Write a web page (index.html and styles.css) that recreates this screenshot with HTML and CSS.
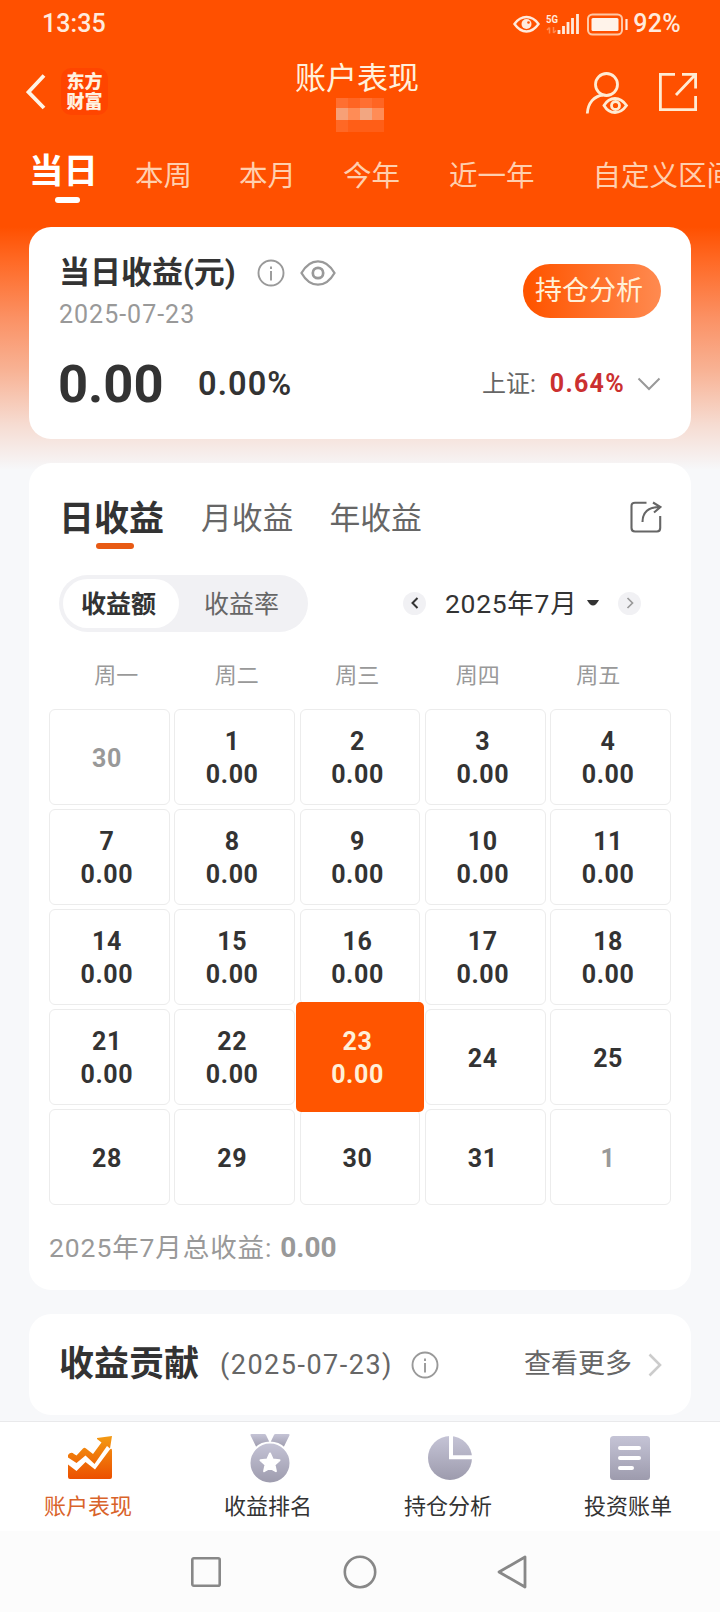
FILE: index.html
```html
<!DOCTYPE html>
<html lang="zh-CN">
<head>
<meta charset="utf-8">
<title>账户表现</title>
<link rel="stylesheet" href="styles.css">
</head>
<body>
<div class="statusbar">
  <span class="clock">13:35</span>
  <svg class="status-icons" width="116" height="24" viewBox="0 0 116 24" fill="none" stroke="#ffeadd">
    <path d="M1.500 12C5 7 9 5 13.500 5S22 7 25.500 12C22 17 18 19.500 13.500 19.500S5 17 1.500 12Z" stroke-width="2.400"/>
    <circle cx="13.500" cy="12" r="5" fill="#ffeadd" stroke="none"/>
    <circle cx="15.500" cy="10.500" r="1.300" fill="#ff5000" stroke="none"/>
    <text class="net" x="33" y="10.500" textLength="12" lengthAdjust="spacingAndGlyphs">5G</text>
    <path d="M36.500 15.500v6M34 18l2.500-2.500M40.500 15v6M40.500 21l2.500-2.500" stroke="#ff8a50" stroke-width="1.500"/>
    <path d="M46 22v-4M50.500 22v-8M55 22v-12M59.500 22V6M64.500 22V2" stroke-width="2.800"/>
    <rect x="75" y="2.500" width="34" height="20" rx="4.500" stroke-width="2" stroke="#ffc7a5"/>
    <rect x="78.500" y="6" width="27" height="13" rx="1.500" fill="#fff3ea" stroke="none"/>
    <path d="M113.500 7v11" stroke-width="2.200"/>
  </svg>
  <span class="percent">92%</span>
</div>
<header class="topbar">
  <svg class="back" width="20" height="36" viewBox="0 0 20 36" fill="none" stroke="#fff4e6" stroke-width="3.800"><path d="M18 1.500 2.500 18 18 34"/></svg>
  <div class="logo"><span>东方</span><span>财富</span></div>
  <div class="title">
    <h1>账户表现</h1>
    <svg width="48" height="34" viewBox="0 0 48 34" shape-rendering="crispEdges">
      <path fill="#ff6f31" d="M0 0h12v10H0zM24 0h12v10H24z"/><path fill="#ff6523" d="M12 0h12v10H12zM36 0h12v10H36z"/>
      <path fill="#f7a077" d="M0 10h12v12H0z"/><path fill="#ff8c56" d="M12 10h12v12H12zM36 10h12v12H36z"/><path fill="#f2a681" d="M24 10h12v12H24z"/>
      <path fill="#ff6825" d="M0 22h12v12H0z"/><path fill="#ff5e17" d="M12 22h36v12H12z"/>
    </svg>
  </div>
  <svg class="user" width="44" height="44" viewBox="0 0 44 44" fill="none" stroke="#ffebd3" stroke-width="2.800">
    <circle cx="21.500" cy="13.500" r="11"/><path d="M2.300 42.500C3 32 9 25 18 24"/>
    <path d="M19 34.500c3-5 7-7 11-7s8 2 11.500 7c-3.500 5-7.500 7-11.500 7s-8-2-11-7Z"/><circle cx="30.500" cy="34.500" r="4"/>
  </svg>
  <svg class="export" width="40" height="40" viewBox="0 0 40 40" fill="none" stroke="#ffebd3" stroke-width="2.800"><path d="M17 2.400H2.400v35.200h35.200V24M24 2.400h13.600v14M37 3 18 23"/></svg>
</header>
<nav class="ranges">
  <span class="range active">当日</span><span class="range r2">本周</span><span class="range r3">本月</span><span class="range r4">今年</span><span class="range r5">近一年</span><span class="range r6">自定义区间</span>
</nav>
<main>
  <section class="card summary">
    <div class="summary-head">
      <div>
        <div class="summary-title"><h2>当日收益(元)</h2>
          <svg class="info" width="28" height="28" viewBox="0 0 28 28" fill="none" stroke="#999" stroke-width="1.900"><circle cx="14" cy="14" r="12.500"/><path d="M14 12v9.500M14 7.500v2.500"/></svg>
          <svg class="eye" width="36" height="28" viewBox="0 0 36 28" fill="none" stroke="#999" stroke-width="2.300"><path d="M1.500 14C6 6 12 2.300 18 2.300S30 6 34.500 14C30 22 24 25.700 18 25.700S6 22 1.500 14Z"/><circle cx="18" cy="14" r="5.200" stroke-width="2.700"/></svg>
        </div>
        <div class="date">2025-07-23</div>
      </div>
      <button class="analyze">持仓分析</button>
    </div>
    <div class="figures">
      <span class="amount">0.00</span><span class="rate">0.00%</span>
      <span class="index-name">上证:</span><span class="index-rate">0.64%</span>
      <svg width="24" height="14" viewBox="0 0 24 14" fill="none" stroke="#999" stroke-width="2"><path d="m1.500 1.500 10.500 10.500L22.500 1.500"/></svg>
    </div>
  </section>

  <section class="card calendar">
    <div class="periods">
      <span class="period active">日收益</span><span class="period p2">月收益</span><span class="period p3">年收益</span>
      <svg width="32" height="32" viewBox="0 0 32 32" fill="none" stroke="#666" stroke-width="2.100"><path d="M16.500 1.800H5Q1.500 1.800 1.500 5v22Q1.500 30.500 5 30.500h22q3.200 0 3.200-3.500V15M12.500 21C12.500 11 18 6 30 6M23 1.500 30.500 6 24 11.500"/></svg>
    </div>
    <div class="controls">
      <div class="segment"><span class="seg active">收益额</span><span class="seg">收益率</span></div>
      <div class="month">
        <span class="arrow"><svg width="8" height="12" viewBox="0 0 8 12" fill="none" stroke="#333" stroke-width="2"><path d="M6.500 1 1.500 6l5 5"/></svg></span>
        <span class="month-name">2025年7月</span>
        <svg class="caret" width="12" height="6" viewBox="0 0 12 6"><path d="M0 0h12Q9 5.500 6 5.500T0 0Z" fill="#333"/></svg>
        <span class="arrow"><svg width="8" height="12" viewBox="0 0 8 12" fill="none" stroke="#999" stroke-width="1.700"><path d="m1.500 1 5 5-5 5"/></svg></span>
      </div>
    </div>
    <div class="weekdays"><span>周一</span><span>周二</span><span>周三</span><span>周四</span><span>周五</span></div>
    <div class="days">
      <div class="day out"><b>30</b></div><div class="day"><b>1</b><b>0.00</b></div><div class="day"><b>2</b><b>0.00</b></div><div class="day"><b>3</b><b>0.00</b></div><div class="day"><b>4</b><b>0.00</b></div>
      <div class="day"><b>7</b><b>0.00</b></div><div class="day"><b>8</b><b>0.00</b></div><div class="day"><b>9</b><b>0.00</b></div><div class="day"><b>10</b><b>0.00</b></div><div class="day"><b>11</b><b>0.00</b></div>
      <div class="day"><b>14</b><b>0.00</b></div><div class="day"><b>15</b><b>0.00</b></div><div class="day"><b>16</b><b>0.00</b></div><div class="day"><b>17</b><b>0.00</b></div><div class="day"><b>18</b><b>0.00</b></div>
      <div class="day"><b>21</b><b>0.00</b></div><div class="day"><b>22</b><b>0.00</b></div><div class="day selected"><b>23</b><b>0.00</b></div><div class="day"><b>24</b></div><div class="day"><b>25</b></div>
      <div class="day"><b>28</b></div><div class="day"><b>29</b></div><div class="day"><b>30</b></div><div class="day"><b>31</b></div><div class="day out"><b>1</b></div>
    </div>
    <div class="total"><span>2025年7月总收益:</span><b>0.00</b></div>
  </section>

  <section class="card contribution">
    <h2>收益贡献</h2><span class="contrib-date">(2025-07-23)</span>
    <svg width="28" height="28" viewBox="0 0 28 28" fill="none" stroke="#999" stroke-width="1.900"><circle cx="14" cy="14" r="12.500"/><path d="M14 12v9.500M14 7.500v2.500"/></svg>
    <span class="more">查看更多</span>
    <svg class="chevron" width="14" height="24" viewBox="0 0 14 24" fill="none" stroke="#ccc" stroke-width="2.600"><path d="m1.500 1.500 10.500 10.500L1.500 22.500"/></svg>
  </section>
</main>
<nav class="tabbar">
  <a class="tab active">
    <svg width="50" height="50" viewBox="0 0 50 50"><defs><linearGradient id="hot" x1="0" y1="0" x2="0" y2="1"><stop offset="0" stop-color="#f39a13"/><stop offset="1" stop-color="#ec5000"/></linearGradient><linearGradient id="cool" x1="0" y1="0" x2="0" y2="1"><stop offset="0" stop-color="#c5c4d6"/><stop offset="1" stop-color="#9d9bad"/></linearGradient></defs>
      <path fill="url(#hot)" d="M47 3 45 15.500 42 13 29.500 31 20.500 22.500 11.500 30 3 24.500V22Q6 18 9 21L11.500 22.500 18 15.500Q19.500 14 21 15.500L28 21 36.500 9.500 32 6V5ZM3 31.500l8.500 6.500 9-9L30 36.500 44.500 17Q47 14 47 18V44q0 2-2 2H5q-2 0-2-2Z"/></svg>
    <span>账户表现</span></a>
  <a class="tab">
    <svg width="50" height="50" viewBox="0 0 50 50"><path fill="url(#cool)" d="M6.500 1h13q1 0 1.400.8L24.500 9.300 22 12 11.500 14.500 5.600 2.500Q5 1 6.500 1ZM43.500 1h-13q-1 0-1.400.8L25.500 9.300 28 12l10.500 2.500L44.400 2.500Q45 1 43.500 1Z"/><circle cx="25" cy="30" r="20.500" fill="url(#cool)" stroke="#fff" stroke-width="2"/><path fill="#fff" stroke="#fff" stroke-width="2" stroke-linejoin="round" d="m25 20.500 2.700 6 6.800.7-5 4.500 1.400 6.500-5.900-3.300-5.900 3.300 1.400-6.500-5-4.500 6.800-.7Z"/></svg>
    <span>收益排名</span></a>
  <a class="tab">
    <svg width="50" height="50" viewBox="0 0 50 50"><circle cx="25" cy="25" r="22" fill="url(#cool)"/><path d="M26 2v22.200h22" fill="none" stroke="#fff" stroke-width="4"/></svg>
    <span>持仓分析</span></a>
  <a class="tab">
    <svg width="50" height="50" viewBox="0 0 50 50"><rect x="5" y="3" width="40" height="44" rx="3.500" fill="url(#cool)"/><path d="M15 15h19M15 25h19M15 35h12" stroke="#fff" stroke-width="4" stroke-linecap="round"/></svg>
    <span>投资账单</span></a>
</nav>
<div class="sysnav">
  <svg class="recent" width="32" height="34" viewBox="0 0 32 34" fill="none" stroke="#888" stroke-width="2.600"><rect x="2.300" y="3.300" width="27.400" height="27.400" rx="1.500"/></svg>
  <svg width="34" height="34" viewBox="0 0 34 34" fill="none" stroke="#888" stroke-width="2.600"><circle cx="17" cy="17" r="15.200"/></svg>
  <svg width="32" height="36" viewBox="0 0 32 36" fill="none" stroke="#888" stroke-width="2.800" stroke-linejoin="round"><path d="M29 3v30L3 18Z"/></svg>
</div>
</body>
</html>
```
FILE: styles.css
```css
* { box-sizing: border-box; }
body {
  margin: 0;
  width: 720px;
  height: 1612px;
  overflow: hidden;
  display: flex;
  flex-direction: column;
  font-family: Roboto, "Noto Sans CJK SC", sans-serif;
  line-height: 1.2;
  color: #333;
  white-space: nowrap;
  background: linear-gradient(#ff5000 0, #ff5000 227px, #ff6a26 262px, #fb9164 318px, #f8b294 370px, #f6dcd2 425px, #f6f0ef 458px, #f7f8fa 470px);
}
h1, h2 { margin: 0; font-weight: 400; }
svg { display: block; flex: none; }

.statusbar { height: 50px; display: flex; align-items: center; padding: 0 39px 2px 42px; color: #ffeadd; font-size: 25px; font-weight: 500; }
.clock { letter-spacing: .1px; }
.status-icons { margin-left: auto; }
.net { font: 700 11.500px Roboto, sans-serif; fill: #ffeadd; stroke: none; }
.percent { margin-left: 4px; letter-spacing: .3px; }

.topbar { height: 90px; display: flex; align-items: flex-start; padding-top: 10px; }
.back { margin: 14px 0 0 26px; }
.logo { width: 47px; height: 47px; margin: 8px 0 0 15px; border-radius: 10px; background: #ff4500; color: #fff2e0; display: flex; flex-direction: column; align-items: center; justify-content: center; font-size: 18px; font-weight: 900; line-height: 20px; }
.title { width: 124px; margin-left: 187px; display: flex; flex-direction: column; align-items: center; }
.title h1 { font-size: 31px; line-height: 38px; color: #fff0dc; }
.title svg { margin: 0 0 0 6px; }
.user { margin: 11px 0 0 166px; }
.export { margin: 12px 0 0 29px; }

.ranges { height: 87px; display: flex; align-items: flex-start; overflow: hidden; }
.range { flex: none; font-size: 28.500px; line-height: 36px; margin-top: 19px; color: #ffcfae; }
.range.active { margin: 10px 0 0 29px; font-size: 34.500px; line-height: 42px; font-weight: 700; color: #fff; }
.range.active::after { content: ""; display: block; width: 25px; height: 6px; border-radius: 3px; margin: 5px 0 0 26px; background: #fff; }
.r2 { margin-left: 37px; }
.r3 { margin-left: 47px; }
.r4 { margin-left: 47px; }
.r5 { margin-left: 49px; }
.r6 { margin-left: 58px; }

main { display: flex; flex-direction: column; gap: 24px; padding: 0 29px; height: 1194px; flex: none; }
.card { background: #fff; border-radius: 22px; flex: none; }

.summary { height: 212px; padding: 25px 30px 0 31px; }
.summary-head { display: flex; justify-content: space-between; height: 90px; }
.summary-title { display: flex; align-items: center; height: 42px; }
.summary-title h2 { width: 175px; margin-left: -1px; font-size: 31px; font-weight: 700; line-height: 42px; }
.info { margin-left: 23px; }
.eye { margin-left: 15px; }
.date { font-size: 25px; line-height: 42px; letter-spacing: 1px; margin-left: -1px; color: #999; }
.analyze { width: 138px; height: 54px; margin-top: 12px; padding: 1px 6px 0 0; border: 0; border-radius: 27px; background: linear-gradient(90deg, #ff5500 5%, #ff8a50); color: #fff0d8; font: 400 27px/53px Roboto, "Noto Sans CJK SC", sans-serif; }
.figures { display: flex; align-items: center; height: 80px; margin-top: 2px; }
.amount { width: 140px; margin-left: -2px; font-size: 52.500px; font-weight: 700; }
.rate { font-size: 32.500px; font-weight: 600; letter-spacing: 1.100px; }
.index-name { margin-left: auto; font-size: 24px; color: #666; }
.index-rate { margin: 0 12px 0 14px; font-size: 25px; line-height: 28px; padding-bottom: 1px; font-weight: 700; letter-spacing: 1.300px; color: #cb3030; }

.calendar { height: 827px; padding: 28px 20px 0; }
.periods { display: flex; height: 84px; align-items: flex-start; }
.period { font-size: 30.800px; line-height: 54px; margin-top: 1px; color: #666; }
.period.active { margin: 3px 0 0 10px; font-size: 35px; line-height: 52px; font-weight: 700; color: #333; }
.period.active::after { content: ""; display: block; width: 38px; height: 6px; border-radius: 3px; margin: -3px 0 0 37px; background: #e85a14; }
.p2 { margin-left: 37px; }
.p3 { margin-left: 36px; }
.periods svg { margin: 10px 9px 0 auto; }
.controls { display: flex; justify-content: space-between; align-items: center; height: 57px; padding: 0 30px 0 10px; }
.segment { display: flex; width: 249px; height: 57px; padding: 4px; border-radius: 29px; background: #f1f1f4; }
.seg { width: 126px; text-align: center; font-size: 25px; line-height: 52px; color: #666; }
.seg.active { width: 117px; height: 49px; padding-right: 5px; border-radius: 25px; background: #fff; color: #333; font-weight: 700; }
.month { display: flex; align-items: center; }
.arrow { width: 23px; height: 23px; border-radius: 50%; background: #f1f1f4; display: flex; align-items: center; justify-content: center; }
.month-name { margin-left: 19px; width: 132px; font-size: 26.500px; letter-spacing: .7px; }
.caret { margin: 0 19px 0 10px; }
.weekdays { display: grid; grid-template-columns: repeat(5, 120.500px); height: 77px; padding: 22px 0 0 7px; text-align: center; font-size: 22px; line-height: 43px; color: #999; }
.days { display: grid; grid-template-columns: repeat(5, 120.800px); grid-auto-rows: 96px; gap: 4px 4.500px; }
.day { border: 1px solid #ececec; border-radius: 6px; padding: 2px 5px 0 0; display: flex; flex-direction: column; align-items: center; justify-content: center; font-size: 25px; line-height: 33px; letter-spacing: .6px; }
.day b { font-weight: 700; }
.day.out { color: #999; }
.day.selected { margin: -7px -3.500px; background: #ff5500; border: 0; border-radius: 5px; color: #fff0d8; z-index: 1; }
.total { display: flex; align-items: center; height: 84px; padding-top: 2px; font-size: 26.500px; letter-spacing: .9px; color: #999; }
.total b { margin-left: 8px; font-size: 28px; letter-spacing: 0; }

.contribution { height: 101px; display: flex; align-items: center; padding: 0 29px 0 30px; }
.contribution h2 { font-size: 35px; font-weight: 700; }
.contrib-date { margin-left: 21px; padding-top: 1px; font-size: 27px; letter-spacing: 1.500px; color: #666; }
.contribution svg { margin-left: 18px; }
.more { margin-left: auto; font-size: 27px; color: #666; }
.contribution .chevron { margin-left: 16px; }

.tabbar { height: 110px; flex: none; display: flex; background: #fff; border-top: 1px solid #e9e9eb; }
.tab { width: 180px; display: flex; flex-direction: column; align-items: center; padding-top: 11px; color: #333; font-size: 22px; line-height: 32px; }
.tab span { margin: 8px 4px 0 0; }
.tab.active { color: #d9632a; }
.sysnav { height: 81px; flex: none; display: flex; align-items: center; justify-content: center; gap: 119px; padding-right: 2px; background: #fcfcfc; }
.recent { margin-right: 2px; }
```
